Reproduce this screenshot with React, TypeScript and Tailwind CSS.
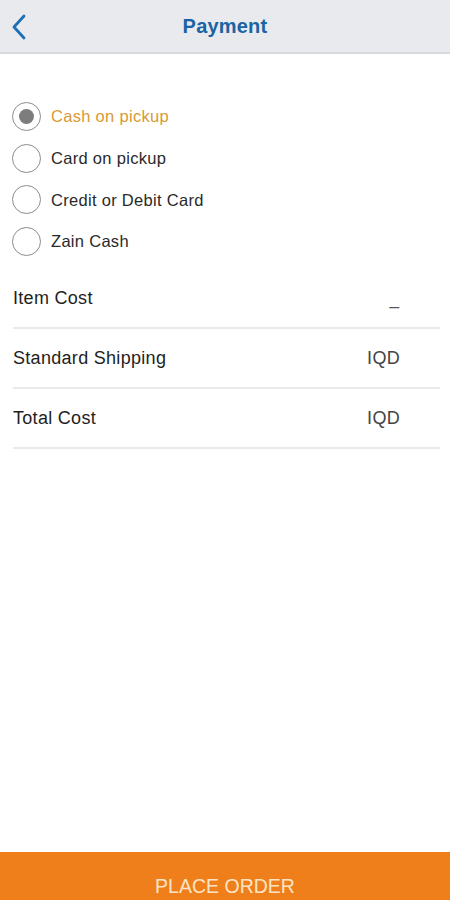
import React, { useState } from 'react'

const methods = ['Cash on pickup', 'Card on pickup', 'Credit or Debit Card', 'Zain Cash']

const costs = [
    { label: 'Item Cost', value: '_', dash: true },
    { label: 'Standard Shipping', value: 'IQD' },
    { label: 'Total Cost', value: 'IQD' },
]

const App = () => {
    const [selected, setSelected] = useState(0)
    return (
        <div className="flex flex-col h-[900px] w-[450px] bg-white overflow-hidden" style={{ fontFamily: '"Liberation Sans", Arial, sans-serif' }}>
            <div className="relative flex items-center justify-center h-[54px] bg-[#e9eaed] border-b-2 border-[#d9dadd] shrink-0">
                <svg className="absolute left-[10px] top-[14px]" width="18" height="26" viewBox="0 0 18 26" fill="none">
                    <path d="M14 2 L4 13 L14 24" stroke="#1f6fb5" strokeWidth="2.8" strokeLinecap="round" strokeLinejoin="round" />
                </svg>
                <h1 className="text-[20px] font-bold text-[#1a64a3] tracking-[0.2px]">Payment</h1>
            </div>
            <div className="flex flex-col gap-[12.7px] pl-[12px] pt-[48px]">
                {methods.map((m, i) => (
                    <div key={m} className="flex items-center gap-[10px] cursor-pointer" onClick={() => setSelected(i)}>
                        <div className="w-[29px] h-[29px] rounded-full border-[1.5px] border-[#8c8c8c] flex items-center justify-center">
                            {selected === i && <div className="w-[15px] h-[15px] rounded-full bg-[#7d7d7d]" />}
                        </div>
                        <span className={selected === i ? 'text-[16.5px] tracking-[0.3px] text-[#d99a35]' : 'text-[16.5px] tracking-[0.3px] text-[#2a2a2a]'}>{m}</span>
                    </div>
                ))}
            </div>
            <div className="flex flex-col pl-[13px] pr-[10px] mt-[13px]">
                {costs.map((c) => (
                    <div key={c.label} className="flex justify-between items-center h-[60px] border-b-2 border-[#eaeaea] pr-[40px]">
                        <span className="text-[18px] tracking-[0.3px] text-[#1e1e1e]">{c.label}</span>
                        <span className={c.dash ? 'text-[17px] text-[#555] mt-[4px] pr-[1px]' : 'text-[18px] tracking-[0.3px] text-[#444]'}>{c.value}</span>
                    </div>
                ))}
            </div>
            <div className="flex-1" />
            <button className="h-[48px] shrink-0 bg-[#ef7f1a] text-[#fbe4c6] text-[19.5px] flex justify-center pt-[25px] leading-none">
                PLACE ORDER
            </button>
        </div>
    )
}

export default App
